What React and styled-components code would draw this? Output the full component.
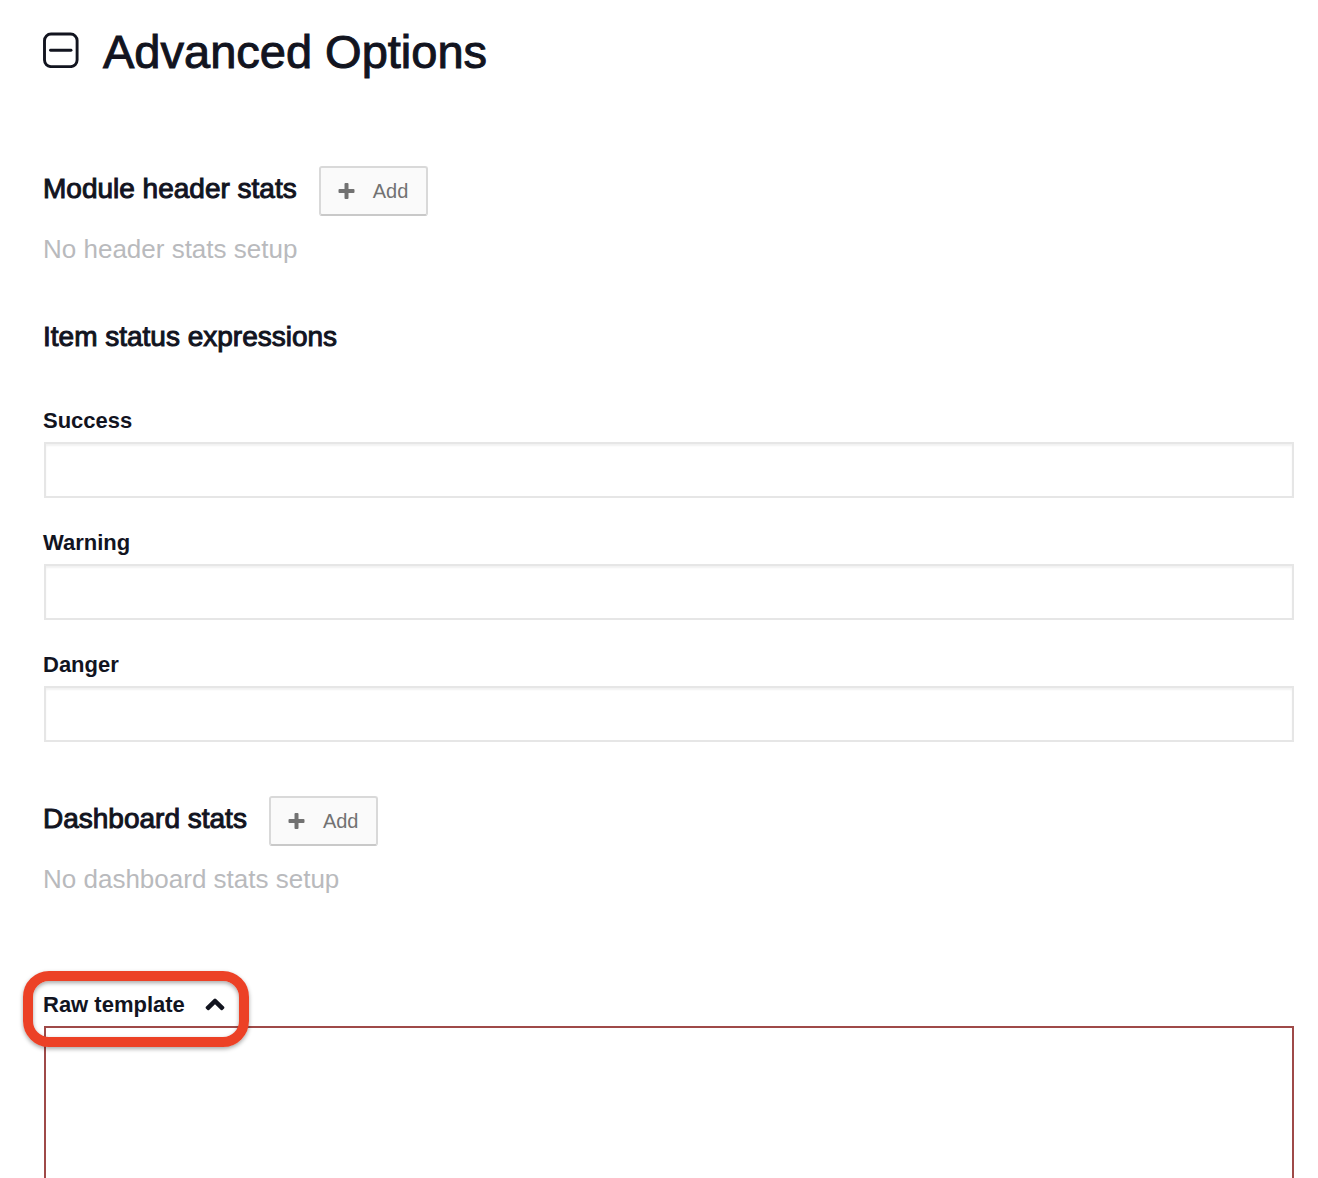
import React, { useId, useState } from "react";
import styled, { createGlobalStyle } from "styled-components";

const GlobalStyle = createGlobalStyle`
  *, *::before, *::after { box-sizing: border-box; }
  body {
    margin: 0;
    background: #fff;
    color: #12141f;
    font-family: "Helvetica Neue", "Liberation Sans", Arial, sans-serif;
    -webkit-font-smoothing: antialiased;
  }
`;

const Page = styled.main`
  padding: 24px 24px 0 43px;
`;

const TitleToggle = styled.button`
  display: flex;
  align-items: center;
  gap: 24px;
  padding: 0;
  border: 0;
  background: none;
  color: inherit;
  font: inherit;
  cursor: pointer;

  svg {
    flex: none;
    margin-bottom: 4px;
  }
`;

const Title = styled.h1`
  margin: 0;
  font-size: 47px;
  line-height: 56px;
  font-weight: 400;
  -webkit-text-stroke: 1px currentColor;
`;

const Section = styled.section`
  margin-top: ${({ $space }) => $space}px;
`;

const SectionHeader = styled.header`
  display: flex;
  align-items: center;
  gap: 22px;
`;

const SectionTitle = styled.h2`
  margin: 0;
  padding-bottom: 4px;
  font-size: 28px;
  line-height: 32px;
  font-weight: 400;
  -webkit-text-stroke: 1px currentColor;
`;

const AddButton = styled.button`
  display: flex;
  align-items: center;
  gap: 18px;
  height: 50px;
  padding: 0 18px 0 17px;
  border: 2px solid #d9d9d9;
  border-bottom-color: #c9c9c9;
  border-radius: 3px;
  background: #fafafa;
  color: #727272;
  font-family: inherit;
  font-size: 20px;
  line-height: 24px;
  cursor: pointer;
`;

const EmptyNote = styled.p`
  margin: 17px 0 0;
  color: #b9babd;
  font-size: 26px;
  line-height: 32px;
`;

const Fields = styled.div`
  display: grid;
  gap: 29px;
  margin-top: 48px;
`;

const Field = styled.div`
  display: grid;
  gap: 5px;
`;

const Label = styled.label`
  font-size: 22px;
  line-height: 32px;
  font-weight: 700;
`;

const TextInput = styled.input`
  height: 56px;
  margin-left: 1px;
  padding: 0 14px;
  border: 2px solid #e6e6e6;
  border-radius: 0;
  background: #fff;
  box-shadow: inset 0 2px 2px #f2f2f2;
  color: inherit;
  font: inherit;
  font-size: 24px;
  outline: 0;
`;

const TemplateHeader = styled.div`
  position: relative;
  display: flex;
  align-items: center;
  gap: 20px;
  width: fit-content;
`;

const Highlight = styled.span`
  position: absolute;
  inset: -18px -24px -26px -20px;
  border: 10px solid #ec4126;
  border-radius: 26px;
  box-shadow: 0 2px 4px rgba(0, 0, 0, 0.35), inset 0 2px 4px rgba(0, 0, 0, 0.35);
  pointer-events: none;
`;

const CaretButton = styled.button`
  display: flex;
  padding: 0;
  border: 0;
  background: none;
  color: inherit;
  cursor: pointer;
`;

const TemplateInput = styled.textarea`
  height: 304px;
  margin-left: 1px;
  padding: 14px;
  border: 2px solid #9f4a48;
  border-radius: 0;
  background: #fff;
  color: inherit;
  font-family: "Liberation Mono", monospace;
  font-size: 24px;
  outline: 0;
  resize: none;
`;

function CollapseIcon() {
  return (
    <svg width="36" height="36" viewBox="0 0 36 36" fill="none" stroke="currentColor" aria-hidden="true">
      <rect x="1.5" y="2" width="32.6" height="32.6" rx="6.5" strokeWidth="2.9" />
      <path d="M7.5 18.3H28" strokeWidth="2.9" strokeLinecap="round" />
    </svg>
  );
}

function PlusIcon() {
  return (
    <svg width="17" height="17" viewBox="0 0 17 17" fill="currentColor" aria-hidden="true">
      <path d="M7.5 0h2q1 0 1 1v5h5q1 0 1 1v2q0 1-1 1h-5v5q0 1-1 1h-2q-1 0-1-1v-5h-5q-1 0-1-1v-2q0-1 1-1h5v-5q0-1 1-1z" />
    </svg>
  );
}

function CaretUpIcon() {
  return (
    <svg width="20" height="14" viewBox="0 0 20 14" fill="currentColor" aria-hidden="true">
      <path d="M10 .4q.6 0 1.1 .5l8 7.9q.7 .8 0 1.6l-1.6 1.6q-.8 .7-1.6 0L10 6.2l-5.900 5.800q-.8 .7-1.600 0L.9 10.400q-.7-.8 0-1.600l8-7.900q.5-.5 1.100-.5z" />
    </svg>
  );
}

function StatsSection({ title, note, space }) {
  return (
    <Section $space={space}>
      <SectionHeader>
        <SectionTitle>{title}</SectionTitle>
        <AddButton type="button">
          <PlusIcon />
          Add
        </AddButton>
      </SectionHeader>
      <EmptyNote>{note}</EmptyNote>
    </Section>
  );
}

function TextField({ label }) {
  const id = useId();
  return (
    <Field>
      <Label htmlFor={id}>{label}</Label>
      <TextInput id={id} type="text" />
    </Field>
  );
}

export default function App() {
  const [open, setOpen] = useState(true);
  const [templateOpen, setTemplateOpen] = useState(true);

  return (
    <>
      <GlobalStyle />
      <Page>
        <TitleToggle type="button" aria-expanded={open} onClick={() => setOpen(!open)}>
          <CollapseIcon />
          <Title as="span" role="heading" aria-level="1">Advanced Options</Title>
        </TitleToggle>
        {open && (
          <>
            <StatsSection title="Module header stats" note="No header stats setup" space={86} />
            <Section $space={56}>
              <SectionTitle>Item status expressions</SectionTitle>
              <Fields>
                {["Success", "Warning", "Danger"].map((name) => (
                  <TextField key={name} label={name} />
                ))}
              </Fields>
            </Section>
            <StatsSection title="Dashboard stats" note="No dashboard stats setup" space={54} />
            <Section $space={94}>
              <Field>
                <TemplateHeader>
                  <Label htmlFor="raw-template">Raw template</Label>
                  <CaretButton
                    type="button"
                    aria-label="Toggle raw template"
                    aria-expanded={templateOpen}
                    onClick={() => setTemplateOpen(!templateOpen)}
                  >
                    <CaretUpIcon />
                  </CaretButton>
                  <Highlight />
                </TemplateHeader>
                {templateOpen && <TemplateInput id="raw-template" />}
              </Field>
            </Section>
          </>
        )}
      </Page>
    </>
  );
}
